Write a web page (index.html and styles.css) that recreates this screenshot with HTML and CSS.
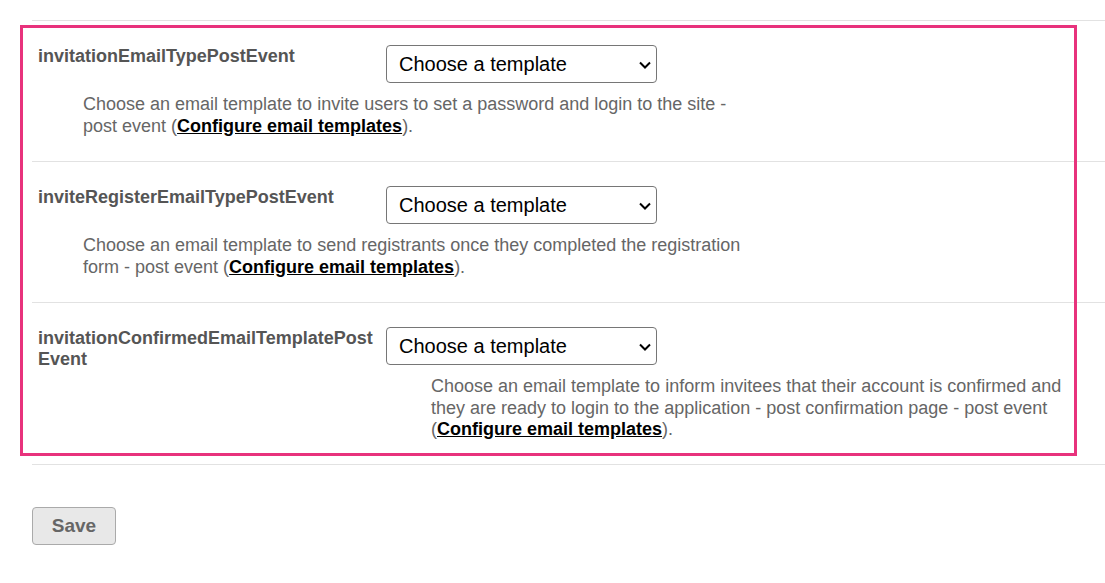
FILE: index.html
```html
<!DOCTYPE html>
<html lang="en">
<head>
<meta charset="utf-8">
<title>Email template settings</title>
<link rel="stylesheet" href="styles.css">
</head>
<body>
<div class="page">
  <div class="settings">
    <div class="row">
      <label class="row-label" for="s1">invitationEmailTypePostEvent</label>
      <div class="select-wrap">
        <select id="s1" class="select"><option>Choose a template</option></select>
        <svg class="chevron" width="12" height="8" viewBox="0 0 12 8"><path d="M1 1.5 L6 6.5 L11 1.5" fill="none" stroke="#000" stroke-width="2"/></svg>
      </div>
      <p class="desc">Choose an email template to invite users to set a password and login to the site - post event (<a href="#">Configure email templates</a>).</p>
    </div>
    <div class="row">
      <label class="row-label" for="s2">inviteRegisterEmailTypePostEvent</label>
      <div class="select-wrap">
        <select id="s2" class="select"><option>Choose a template</option></select>
        <svg class="chevron" width="12" height="8" viewBox="0 0 12 8"><path d="M1 1.5 L6 6.5 L11 1.5" fill="none" stroke="#000" stroke-width="2"/></svg>
      </div>
      <p class="desc">Choose an email template to send registrants once they completed the registration form - post event (<a href="#">Configure email templates</a>).</p>
    </div>
    <div class="row row-last">
      <label class="row-label" for="s3">invitationConfirmedEmailTemplatePostEvent</label>
      <div class="select-wrap">
        <select id="s3" class="select"><option>Choose a template</option></select>
        <svg class="chevron" width="12" height="8" viewBox="0 0 12 8"><path d="M1 1.5 L6 6.5 L11 1.5" fill="none" stroke="#000" stroke-width="2"/></svg>
      </div>
      <p class="desc desc-indented">Choose an email template to inform invitees that their account is confirmed and they are ready to login to the application - post confirmation page - post event (<a href="#">Configure email templates</a>).</p>
    </div>
  </div>
  <button class="save" type="button">Save</button>
  <div class="highlight"></div>
</div>
</body>
</html>
```

FILE: styles.css
```css
html, body {
  margin: 0;
  padding: 0;
  background: #fff;
}

body {
  font-family: "Liberation Sans", Arial, sans-serif;
  color: #555;
}

.page {
  position: relative;
  padding: 20px 0 0 32px;
  min-height: 563px;
}

.settings {
  border-top: 1px solid #e2e2e2;
}

.row {
  display: flex;
  flex-wrap: wrap;
  align-items: flex-start;
  padding: 24px 0 24px 6px;
  border-bottom: 1px solid #e2e2e2;
}

.row-last {
  padding-bottom: 23px;
}

.row-label {
  width: 342px;
  margin-right: 6px;
  font-size: 18px;
  line-height: 21px;
  font-weight: bold;
  color: #555;
  word-break: break-all;
  padding-top: 1px;
}

.select-wrap {
  position: relative;
  width: 271px;
  height: 38px;
}

.select {
  appearance: none;
  -webkit-appearance: none;
  width: 271px;
  height: 38px;
  box-sizing: border-box;
  border: 1px solid #767676;
  border-radius: 4px;
  background: #fff;
  font-family: "Liberation Sans", Arial, sans-serif;
  font-size: 20px;
  color: #000;
  padding: 0 30px 0 12px;
  margin: 0;
}

.chevron {
  position: absolute;
  right: 6px;
  top: 16px;
  pointer-events: none;
}

.desc {
  flex-basis: 100%;
  box-sizing: border-box;
  max-width: 707px;
  margin: 10px 0 0 0;
  padding-left: 45px;
  font-size: 18px;
  line-height: 22px;
  color: #666;
}

.desc-indented {
  max-width: 1055px;
  padding-left: 393px;
  margin-top: 6px;
  line-height: 21.5px;
}

.desc a {
  color: #000;
  font-weight: bold;
  text-decoration: underline;
}

.save {
  margin-top: 42px;
  width: 84px;
  height: 38px;
  background: #e8e8e8;
  border: 1px solid #aaa;
  border-radius: 4px;
  font-family: "Liberation Sans", Arial, sans-serif;
  font-size: 19px;
  font-weight: bold;
  color: #666;
  padding: 0;
}

.highlight {
  position: absolute;
  left: 20px;
  top: 25px;
  width: 1051px;
  height: 425px;
  border: 3px solid #e8327c;
  pointer-events: none;
}
```
